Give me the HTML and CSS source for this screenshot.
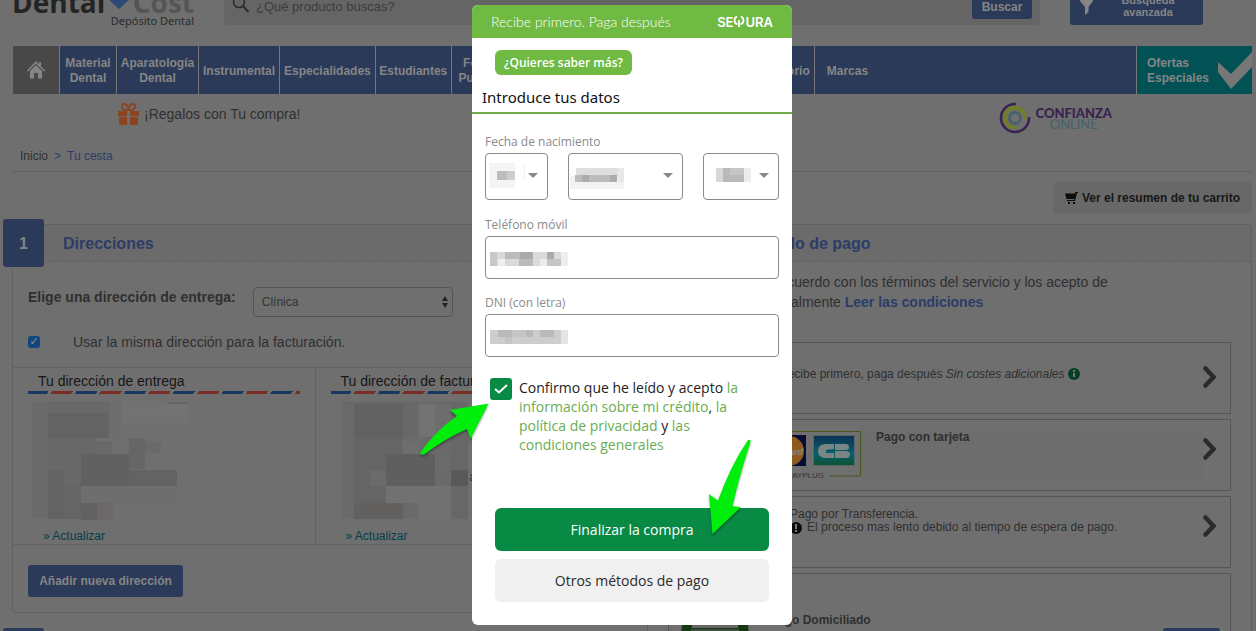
FILE: index.html
```html
<!DOCTYPE html>
<html lang="es">
<head>
<meta charset="utf-8">
<meta name="viewport" content="width=device-width, initial-scale=1">
<title>Tu cesta</title>
<link rel="stylesheet" href="styles.css">
</head>
<body>
<div class="page">
  <header class="top">
    <div class="brand">
      <div class="brand-name"><span class="brand-dark">Dental</span><svg class="brand-heart" width="24" height="24" viewBox="0 0 24 24"><path d="M12 24 0 13V4q4-6 12 1 8-7 12-1v9z" fill="#2b4a78"/></svg><span class="brand-light">Cost</span></div>
      <div class="brand-sub">Depósito Dental</div>
    </div>
    <form class="search">
      <svg class="search-icon" width="18" height="18" viewBox="0 0 18 18"><circle cx="7" cy="6" r="5.5" fill="none" stroke="#2d2d2d" stroke-width="1.6"/><path d="m11 10 5.500 6" stroke="#2d2d2d" stroke-width="2"/></svg>
      <input class="search-input" type="text" aria-label="Buscar producto" placeholder="¿Qué producto buscas?">
      <button class="search-button" type="button">Buscar</button>
    </form>
    <button class="advanced" type="button">
      <svg width="13" height="16" viewBox="0 0 13 16"><path d="M0 0h13v2L8.500 8v5L5 16V8L0 2z" fill="#858585"/></svg>
      <span class="advanced-label">Búsqueda avanzada</span>
    </button>
  </header>

  <nav class="nav">
    <a class="nav-home" href="#" aria-label="Inicio"><svg width="18" height="18" viewBox="0 0 18 18"><path d="M9 0 0 9.500l1 1L9 2.500l8 8 1-1-4-4V1h-2v2.500z" fill="#858585"/><path d="m9 4-6 6v7.500h4V12h4v5.500h4V10z" fill="#858585"/></svg></a>
    <a class="nav-item nav-material" href="#">Material Dental</a>
    <a class="nav-item nav-aparatologia" href="#">Aparatología Dental</a>
    <a class="nav-item" href="#">Instrumental</a>
    <a class="nav-item" href="#">Especialidades</a>
    <a class="nav-item nav-students" href="#">Estudiantes</a>
    <a class="nav-item nav-training" href="#">Formación y Publicaciones</a>
    <a class="nav-item nav-lab" href="#">Laboratorio</a>
    <a class="nav-item nav-brands" href="#">Marcas</a>
    <a class="nav-offers" href="#"><span>Ofertas<br>Especiales</span><svg width="34" height="38" viewBox="0 0 34 38"><path d="M0 10v10l13 17 21-22V0L13 22z" fill="#777"/></svg></a>
  </nav>

  <div class="promo">
    <div class="gifts">
      <svg width="21" height="22" viewBox="0 0 21 22"><g fill="#8a441f"><path d="M0 8h9v5H0zM12 8h9v5h-9zM1 14h8v8H1zM12 14h8v8h-8z"/></g><g fill="none" stroke="#8a441f" stroke-width="1.800"><path d="M10.500 7C2 8 3 0 6.500 1c3 0 4 4 4 6zM10.500 7C19 8 18 0 14.500 1c-3 0-4 4-4 6z"/></g></svg>
      <span>¡Regalos con Tu compra!</span>
    </div>
    <div class="trust">
      <svg width="32" height="32" viewBox="0 0 32 32" fill="none"><path d="M17 2A14 14 0 1 0 30 15" stroke="#3a2350" stroke-width="2.600"/><path d="M17 25.500A10 10 0 1 1 25.500 18" stroke="#70801c" stroke-width="3"/><circle cx="16" cy="16" r="5.500" stroke="#48626c" stroke-width="3"/></svg>
      <div class="trust-text"><span class="trust-top">CONFIANZA</span><span class="trust-bottom">ONLINE</span></div>
    </div>
  </div>

  <div class="crumbs"><a href="#">Inicio</a><span class="crumb-active">&gt;</span><span class="crumb-active">Tu cesta</span></div>

  <div class="summary-row">
    <button class="summary" type="button"><svg width="13" height="12" viewBox="0 0 13 12"><path d="M13 0h-2.500l-.7 1.500H0L1.500 7h8l-.4 1H2v1h8L12 1h1zM3 10h2v2H3zM8 10h2v2H8z" fill="#0b0b0b"/></svg>Ver el resumen de tu carrito</button>
  </div>

  <main class="columns">
    <div class="column">
      <section class="panel">
        <h2 class="panel-head"><span class="step">1</span>Direcciones</h2>
        <div class="choose">
          <label class="choose-label" for="address">Elige una dirección de entrega:</label>
          <span class="select-wrap">
            <select class="choose-select" id="address"><option>Clínica</option></select>
            <svg class="select-arrows" width="6" height="12" viewBox="0 0 6 12"><path d="M3 0l3 5H0zM3 12 0 7h6z" fill="#242424"/></svg>
          </span>
        </div>
        <div class="same">
          <input class="same-check" id="same" type="checkbox" checked>
          <label for="same">Usar la misma dirección para la facturación.</label>
        </div>
        <div class="addresses">
          <div class="address">
            <h3 class="address-title">Tu dirección de entrega</h3>
            <div class="airmail"></div>
            <svg class="mosaic-lg" width="160" height="122" viewBox="0 0 160 122">
              <path d="M0 0h4v118H0z" fill="#696b6a"/><path d="M4 0h12v118H4z" fill="#6b6a69"/>
              <path d="M16 0h61v12H16z" fill="#686868"/><path d="M16 12h61v25H16z" fill="#636363"/>
              <path d="M77 0h12v37H77z" fill="#6d6d6e"/><path d="M89 0h67v22H89z" fill="#727273"/>
              <path d="M135 1h21v2h-21z" fill="#6b6360"/>
              <path d="M16 37h48v81H16z" fill="#686868"/><path d="M64 40h16v62H64z" fill="#696969"/>
              <path d="M97 37h16v31H97z" fill="#666"/><path d="M113 40h16v12h-16z" fill="#6a6a6a"/>
              <path d="M49 53h48v32H49z" fill="#616161"/><path d="M97 69h48v16H97z" fill="#636363"/>
              <path d="M16 69h16v49H16z" fill="#636363"/><path d="M32 85h17v33H32z" fill="#656565"/>
              <path d="M49 85h96v17H49z" fill="#6e6e6e"/><path d="M49 102h16v17H49z" fill="#636161"/><path d="M65 102h16v17H65z" fill="#6a6868"/>
            </svg>
            <a class="update" href="#">» Actualizar</a>
          </div>
          <div class="address">
            <h3 class="address-title">Tu dirección de facturación</h3>
            <div class="airmail"></div>
            <div class="redacted-row">
            <svg class="mosaic-lg mosaic-indent" width="126" height="122" viewBox="0 0 126 122">
              <path d="M0 0h126v118H0z" fill="#6a6a6a"/><path d="M0 1h126v2H0z" fill="#646a6e"/>
              <path d="M12 3h49v34H12z" fill="#626262"/><path d="M61 3h16v33H61z" fill="#696868"/>
              <path d="M77 3h16v33H77z" fill="#727272"/><path d="M93 3h16v33H93z" fill="#6e6d6d"/>
              <path d="M109 3h17v115h-17z" fill="#676767"/><path d="M12 37h48v81H12z" fill="#656565"/>
              <path d="M61 40h16v13H61z" fill="#6e6e6e"/><path d="M44 53h49v32H44z" fill="#5f5f5f"/>
              <path d="M93 53h16v16H93z" fill="#6b6b6b"/><path d="M109 69h17v16h-17z" fill="#595959"/>
              <path d="M28 69h16v16H28z" fill="#6b6b6b"/><path d="M44 85h65v17H44z" fill="#717171"/>
              <path d="M12 102h49v16H12z" fill="#636060"/><path d="M77 102h32v16H77z" fill="#717171"/>
            </svg><span>a</span>
            </div>
            <a class="update" href="#">» Actualizar</a>
          </div>
        </div>
        <button class="add" type="button">Añadir nueva dirección</button>
      </section>
      <section class="panel panel-next"><h2 class="panel-head"><span class="step"></span></h2></section>
    </div>

    <div class="column">
      <section class="panel">
        <h2 class="panel-head"><span class="step"></span>Elegir método de pago</h2>
        <p class="terms">Estoy de acuerdo con los términos del servicio y los acepto de<br>incondicionalmente <a class="terms-link" href="#">Leer las condiciones</a></p>
        <div class="methods">
          <div class="method method-first">
            <div class="method-text">Recibe primero, paga después <i>Sin costes adicionales</i> <svg class="dot" width="12" height="12" viewBox="0 0 12 12"><circle cx="6" cy="6" r="6" fill="#054022"/><path d="M5 2h2v2H5zM5 5h2v4H5z" fill="#777"/></svg></div>
            <svg class="chevron" width="14" height="22" viewBox="0 0 14 22"><path d="m2.500 2.500 8 8.500-8 8.500" fill="none" stroke="#2b2b2b" stroke-width="4.500" stroke-linecap="round"/></svg>
          </div>
          <div class="method method-card">
            <div class="cards">
              <svg width="100" height="49" viewBox="0 0 100 49"><path d="M0 .5h99.500V45H68" fill="none" stroke="#46591c"/><path d="M12 4h33v31H12z" fill="#0a0b35"/><circle cx="28" cy="20" r="15" fill="#8c5b1d"/><defs><linearGradient id="cb" x2="0" y2="1"><stop stop-color="#0b3154"/><stop offset=".6" stop-color="#096068"/><stop offset="1" stop-color="#0b5233"/></linearGradient></defs><path d="M52.500 4.500h41v30h-41z" fill="url(#cb)" stroke="#55666d"/><path d="M73 18V13H65q-8 0-8 7t8 7h8v-5h-8v-3zM74 13h10q4 0 4 3 0 3-3 3H74zM74 20h11q4 0 4 3.500 0 3.500-4 3.500H74z" fill="#7b8585"/><text x="42" y="24" text-anchor="end" class="card-word">MasterCard</text><text x="63" y="47" text-anchor="end" class="card-caption">PAYPLUG</text></svg>
            </div>
            <div class="method-text"><b>Pago con tarjeta</b></div>
            <svg class="chevron" width="14" height="22" viewBox="0 0 14 22"><path d="m2.500 2.500 8 8.500-8 8.500" fill="none" stroke="#2b2b2b" stroke-width="4.500" stroke-linecap="round"/></svg>
          </div>
          <div class="method method-transfer">
            <div class="method-text">Pago por Transferencia.<div class="warning"><svg width="12" height="12" viewBox="0 0 12 12"><circle cx="6" cy="6" r="6" fill="#0c0c0c"/><path d="M5 2h2v5H5zM5 8h2v2H5z" fill="#777"/></svg>El proceso mas lento debido al tiempo de espera de pago.</div></div>
            <svg class="chevron" width="14" height="22" viewBox="0 0 14 22"><path d="m2.500 2.500 8 8.500-8 8.500" fill="none" stroke="#2b2b2b" stroke-width="4.500" stroke-linecap="round"/></svg>
          </div>
          <div class="method method-debit">
            <svg width="72" height="40" viewBox="0 0 72 40"><path d="M3 0h66l3 40H0z" fill="#153814"/><path d="M13 0h46v4H13z" fill="#666"/><path d="M12 6h48" stroke="#666"/></svg>
            <div class="method-text"><b>Pago Domiciliado</b></div>
            <button class="debit-button" type="button" aria-label="Elegir"></button>
          </div>
        </div>
      </section>
    </div>
  </main>
</div>

<div class="backdrop">
  <div class="modal" role="dialog" aria-label="Introduce tus datos">
    <div class="modal-head"><span class="modal-claim">Recibe primero. Paga después</span>
      <span class="sequra">SE<svg width="12" height="11" viewBox="0 0 11 11"><path d="M3.500.5Q1 1.500 1 4.500q0 3 3 3.500M7.500.5Q10 1.500 10 4.500q0 3-3 3.500M5.500 4v7" fill="none" stroke="#fff" stroke-width="1.800"/></svg>URA</span>
    </div>
    <button class="more" type="button">¿Quieres saber más?</button>
    <h1 class="modal-title">Introduce tus datos</h1>
    <form class="form">
      <label class="field-label" for="day">Fecha de nacimiento</label>
      <div class="dates">
        <span class="date date-day"><select id="day" class="control" aria-label="Día"><option></option></select>
          <svg class="mosaic mosaic-day" width="36" height="26" viewBox="0 0 36 26"><path d="M0 0h26v25H0z" fill="#f4f4f4"/><path d="M8 8h18v9H8z" fill="#bdbdbd"/><path d="M18 8h8v9h-8z" fill="#cdcdcd"/><path d="M35 0h1v17h-1z" fill="#f0f0f0"/></svg>
          <svg class="caret" width="10" height="5" viewBox="0 0 10 5"><path d="M0 0h10L5 5z" fill="#888"/></svg></span>
        <span class="date date-month"><select class="control" aria-label="Mes"><option></option></select>
          <svg class="mosaic mosaic-month" width="54" height="22" viewBox="0 0 54 22"><path d="M0 8h54v13H0z" fill="#f3f3f3"/><path d="M6 0h42v8H6z" fill="#dedede"/><path d="M5 7h42v7H5z" fill="#bcbcbc"/><path d="M12 7h7v7h-7zM40 7h7v7h-7z" fill="#acacac"/><path d="M48 0h6v14h-6z" fill="#e8e8e8"/></svg>
          <svg class="caret" width="10" height="5" viewBox="0 0 10 5"><path d="M0 0h10L5 5z" fill="#888"/></svg></span>
        <span class="date date-year"><select class="control" aria-label="Año"><option></option></select>
          <svg class="mosaic mosaic-year" width="35" height="14" viewBox="0 0 35 14"><path d="M0 0h35v14H0z" fill="#d8d8d8"/><path d="M7 0h7v14H7zM14 7h14v7H14z" fill="#b9b9b9"/><path d="M14 0h14v7H14z" fill="#c6c6c6"/><path d="M28 0h7v14h-7z" fill="#ececec"/></svg>
          <svg class="caret" width="10" height="5" viewBox="0 0 10 5"><path d="M0 0h10L5 5z" fill="#888"/></svg></span>
      </div>
      <label class="field-label" for="phone">Teléfono móvil</label>
      <span class="field"><input id="phone" class="control" type="tel">
        <svg class="mosaic mosaic-line" width="78" height="14" viewBox="0 0 78 14"><path d="M0 0h78v14H0z" fill="#dadada"/><path d="M0 0h7v14H0z" fill="#c8c8c8"/><path d="M8 7h7v7H8zM71 0h7v14h-7z" fill="#eee"/><path d="M15 0h28v7H15zM29 7h14v7H29z" fill="#bbb"/><path d="M30 0h13v7H30zM57 0h7v7h-7z" fill="#aaa"/><path d="M50 7h7v7h-7z" fill="#ececec"/><path d="M57 7h14v7H57z" fill="#c5c5c5"/></svg></span>
      <label class="field-label" for="dni">DNI (con letra)</label>
      <span class="field"><input id="dni" class="control" type="text">
        <svg class="mosaic mosaic-line" width="78" height="14" viewBox="0 0 78 14"><path d="M0 0h78v14H0z" fill="#cdcdcd"/><path d="M8 0h14v7H8zM36 0h7v7h-7zM50 0h14v7H50z" fill="#b9b9b9"/><path d="M22 0h14v7H22zM15 7h7v7h-7z" fill="#c5c5c5"/><path d="M71 0h7v14h-7z" fill="#e4e4e4"/></svg></span>
      <div class="consent">
        <span class="tick"><input id="consent" class="tick-input" type="checkbox" checked><svg class="tick-mark" width="14" height="10" viewBox="0 0 14 10"><path d="m1 5 4 3.500L13 1" fill="none" stroke="#fff" stroke-width="2"/></svg></span>
        <label class="consent-text" for="consent">Confirmo que he leído y acepto <a href="#">la información sobre mi crédito</a>, <a href="#">la política de privacidad</a> y <a href="#">las condiciones generales</a></label>
      </div>
      <button class="action action-main" type="button">Finalizar la compra</button>
      <button class="action action-other" type="button">Otros métodos de pago</button>
    </form>
    <svg class="pointers" width="340" height="140" viewBox="418 400 340 140"><g fill="#00ee0c"><path d="M420 453q15-22 37-37l-7-6 38.500-6.500-18 35.500-3.500-10q-21 9-43 25.500-3 1-4-1.500z"/><path d="M748 440q3-1 2.500 2-10 30-18 64l8.500 1-28.500 27-3.500-40 9 6.500q13-36 30-60.500z"/></g></svg>
  </div>
</div>
</body>
</html>
```
FILE: styles.css
```css
* { box-sizing: border-box; }

body {
  margin: 0;
  background: #6f6f6f;
  color: #2f2f2f;
  font: 12px/15px "Liberation Sans", Arial, sans-serif;
}

a { color: inherit; text-decoration: none; }
button, input, select { font: inherit; color: inherit; margin: 0; }
button { border: 0; padding: 0; }
h1, h2, h3, p { margin: 0; }
svg { display: block; flex: none; }

/* The page does not scroll while the dialog is open */
.page { height: 100vh; padding: 0 4px 0 12px; overflow: hidden; }

/* Header */
.top {
  display: flex;
  align-items: flex-end;
  height: 46px;
  padding-bottom: 21px;
  overflow: hidden;
}
.brand { width: 182px; margin-bottom: -4px; }
.brand-name {
  display: flex;
  align-items: flex-end;
  justify-content: space-between;
  font: bold 28px/22px "Open Sans", sans-serif;
  height: 22px;
}
.brand-heart { margin-bottom: 4px; }
.brand-dark { color: #242424; }
.brand-light { color: #555; }
.brand-sub { font: 11px/16px "Noto Sans", sans-serif; text-align: right; color: #2b2b2b; }
.search {
  display: flex;
  align-items: flex-end;
  flex: 1;
  height: 45px;
  margin-left: 30px;
  padding: 0 8px 6px;
  background: #656565;
  border-radius: 4px;
}
.search-icon { margin-bottom: 5px; }
.search-input {
  flex: 1;
  height: 26px;
  padding: 0 6px;
  border: 0;
  background: transparent;
  font-size: 13px;
}
.search-input::placeholder { color: #3c3c3c; opacity: 1; }
.search-button {
  width: 60px;
  height: 24px;
  border-radius: 3px;
  background: #2b3a59;
  color: #858585;
  font-weight: bold;
}
.advanced {
  display: flex;
  align-items: flex-end;
  width: 133px;
  height: 40px;
  margin: 0 49px 0 30px;
  padding: 0 10px 7px;
  gap: 22px;
  border-radius: 3px;
  background: #2b3a59;
  color: #858585;
  font-size: 11px;
  line-height: 12px;
  font-weight: bold;
}
.advanced svg { margin-bottom: 3px; }
.advanced-label { width: 66px; text-align: center; }

/* Navigation */
.nav {
  display: flex;
  gap: 1px;
  height: 48px;
  margin-left: 1px;
  background: #777;
  color: #858585;
  font-weight: bold;
  text-align: center;
}
.nav-home { display: grid; place-items: center; width: 46px; background: #484848; }
.nav-item { display: flex; align-items: center; justify-content: center; padding: 2px 4px 0; background: #2b3a59; }
.nav-material { width: 56px; }
.nav-aparatologia { width: 81px; }
.nav-students { width: 75px; }
.nav-training { width: 94px; }
.nav-lab { flex: 269; justify-content: flex-end; }
.nav-brands { flex: 317; justify-content: flex-start; padding-left: 12px; }
.nav-offers {
  display: flex;
  align-items: center;
  justify-content: space-between;
  width: 115px;
  padding: 2px 0 0 10px;
  background: #025155;
  text-align: left;
}

/* Promotion strip */
.promo { display: flex; justify-content: space-between; height: 46px; padding: 8px 140px 0 106px; }
.gifts { display: flex; gap: 5px; height: 24px; align-items: center; font-size: 14px; line-height: 24px; }
.trust { display: flex; gap: 5px; height: 32px; align-items: center; }
.trust-text { display: flex; flex-direction: column; align-items: center; font-family: Lato, sans-serif; }
.trust-top { font-size: 13px; line-height: 12px; font-weight: 900; color: #38234e; }
.trust-bottom { font-size: 13px; line-height: 11px; color: #48606a; }

.crumbs { display: flex; gap: 6px; height: 32px; padding: 9px 8px 0; border-bottom: 1px solid #626262; }
.crumb-active { color: #2b3d68; }

.summary-row { display: flex; justify-content: flex-end; padding-top: 10px; }
.summary {
  display: flex;
  align-items: center;
  gap: 4px;
  height: 32px;
  padding: 0 12px;
  border-radius: 4px;
  background: #686868;
  color: #171717;
  font-weight: bold;
}

/* Panels */
.columns { display: grid; grid-template-columns: 615fr 605fr; column-gap: 20px; margin-top: 10px; }
.panel { border: 1px solid #5f6163; border-radius: 4px; min-height: 60px; }
.panel-next { margin-top: 20px; }
.panel-head {
  display: flex;
  align-items: center;
  height: 37px;
  border-bottom: 1px dashed #616161;
  background: #6b6b6b;
  color: #2b3d68;
  font-size: 16px;
}
.step {
  display: grid;
  place-items: center;
  width: 41px;
  height: 48px;
  margin: 0 19px 0 -10px;
  border-radius: 3px;
  background: #2b3a59;
  color: #858585;
}

.choose { display: flex; gap: 17px; padding: 25px 15px 0; }
.choose-label { font-size: 14px; line-height: 20px; font-weight: bold; }
.select-wrap { position: relative; width: 200px; }
.choose-select {
  width: 100%;
  height: 30px;
  padding: 0 8px;
  appearance: none;
  border: 1px solid #555;
  border-radius: 4px;
  background: transparent;
  color: #343434;
}
.select-arrows { position: absolute; right: 5px; top: 9px; }
.same { display: flex; align-items: center; gap: 33px; height: 50px; padding: 0 15px; font-size: 14px; line-height: 20px; }
.same-check {
  appearance: none;
  width: 12px;
  height: 12px;
  border-radius: 3px;
  background: #10477f;
  display: grid;
  place-items: center;
}
.same-check::after { content: "✓"; color: #909090; font: bold 11px/12px "DejaVu Sans", sans-serif; }

.addresses {
  display: grid;
  grid-template-columns: repeat(2, minmax(0, 1fr));
  padding-right: 8px;
  border-top: 1px solid #5d626c;
  border-bottom: 1px solid #5d626c;
}
.address { height: 176px; padding: 4px 15px 0; border-right: 1px solid #5d626c; }
.address-title { padding-left: 10px; font-size: 14px; line-height: 19px; font-weight: normal; color: #161616; }
.airmail {
  height: 3px;
  background: repeating-linear-gradient(125deg, #183860 0 17px, #6f6f6f 17px 20px, #7a2d26 20px 37px, #6f6f6f 37px 40px);
}
.mosaic-lg { margin: 7px 0 0 4px; }
.mosaic-indent { margin-left: 11px; }
.redacted-row { display: flex; align-items: center; gap: 2px; height: 129px; }
.redacted-row span { padding-top: 38px; }
.update { display: block; padding: 6px 0 0 15px; color: #023e4b; }
.add {
  width: 155px;
  height: 32px;
  margin: 20px 15px 15px;
  border-radius: 3px;
  background: #2b3a59;
  color: #858585;
  font-weight: bold;
}

/* Payment methods */
.terms { padding: 10px 20px 0 73px; font-size: 14px; line-height: 20px; }
.terms-link { font-weight: bold; color: #2b3d68; }
.methods { display: grid; gap: 5px; padding: 30px 20px 20px; }
.method { display: flex; height: 72px; padding: 11px 10px; border: 1px solid #565656; }
.method-text { flex: 1; line-height: 13px; }
.chevron { margin: 7px 3px 0 0; }
.dot { display: inline-block; vertical-align: -2px; }
.method-first .method-text { padding: 13px 0 0 100px; line-height: 15px; }
.method-first .chevron { margin-top: 12px; }
.method-card .cards { width: 182px; padding-left: 82px; }
.method-card .method-text { padding: 0 0 0 15px; background: #6d6d6d; line-height: 12px; }
.method-transfer .method-text { padding-left: 111px; }
.warning { display: flex; align-items: center; gap: 5px; }
.method-debit { height: 90px; padding-top: 50px; }
.method-debit .method-text { padding-left: 19px; margin-top: -10px; }
.debit-button { width: 57px; height: 30px; margin-top: 4px; border-radius: 3px; background: #2b3a59; }
.card-word { font: italic bold 9px "Liberation Sans", sans-serif; fill: #858585; }
.card-caption { font: 8px "Liberation Sans", sans-serif; fill: #343434; }

/* Dialog */
.backdrop {
  position: fixed;
  inset: 0;
  display: flex;
  justify-content: center;
  align-items: flex-start;
  padding: 5px 0 0 8px;
}
.modal {
  position: relative;
  width: 320px;
  padding-bottom: 23px;
  border-radius: 6px;
  background: #fff;
  color: #222;
  font: 14px/19px "Open Sans", sans-serif;
}
.modal-head {
  display: flex;
  align-items: center;
  justify-content: space-between;
  height: 33px;
  padding: 0 19px;
  border-radius: 6px 6px 0 0;
  background: #70ba44;
  color: #fff;
}
.modal-claim { font: 300 14px/20px Lato, sans-serif; }
.sequra { display: flex; align-items: center; font: 600 13px/14px Inter, sans-serif; }
.more {
  display: block;
  width: 137px;
  height: 25px;
  margin: 12px 0 0 23px;
  border-radius: 6px;
  background: #70ba44;
  color: #fff;
  font-size: 12px;
  font-weight: 600;
}
.modal-title {
  height: 39px;
  padding: 13px 10px 0;
  border-bottom: 2px solid #6fae45;
  font: 15px/19px "Noto Sans", sans-serif;
  color: #111;
}
.form { padding: 19px 13px 0; }
.field-label { display: block; height: 20px; font-size: 12px; line-height: 18px; color: #8b8b8b; }
.dates { display: flex; gap: 20px; height: 47px; margin-bottom: 16px; }
.date, .field { display: block; position: relative; }
.date-day { flex: 63; }
.date-month { flex: 115; }
.date-year { flex: 76; }
.field { height: 43px; margin-bottom: 15px; }
.control {
  display: block;
  width: 100%;
  height: 100%;
  padding: 0 10px;
  appearance: none;
  border: 1px solid #8b8b8b;
  border-radius: 4px;
  background: #fff;
}
.caret { position: absolute; right: 10px; top: 20px; }
.mosaic { position: absolute; }
.mosaic-day { left: 4px; top: 10px; }
.mosaic-month { left: 2px; top: 15px; }
.mosaic-year { left: 13px; top: 15px; }
.mosaic-line { left: 5px; top: 16px; }

.consent { display: flex; gap: 7px; margin: 21px 0 54px; padding: 0 30px 0 5px; }
.tick { position: relative; flex: none; width: 22px; height: 22px; }
.tick-input { display: block; appearance: none; width: 22px; height: 22px; border-radius: 3px; background: #088a45; }
.tick-mark { position: absolute; left: 4px; top: 6px; pointer-events: none; }
.consent-text a { color: #68ad52; }
.action { display: block; width: calc(100% - 20px); height: 43px; margin: 0 10px; border-radius: 6px; }
.action-main { background: #088a45; color: #fff; font-weight: 500; }
.action-other { margin-top: 8px; background: #f0f0f0; color: #2b2b2b; }
.pointers {
  position: absolute;
  left: -54px;
  top: 395px;
  pointer-events: none;
  filter: drop-shadow(0 2px 1px rgba(0, 0, 0, .35));
}
```
